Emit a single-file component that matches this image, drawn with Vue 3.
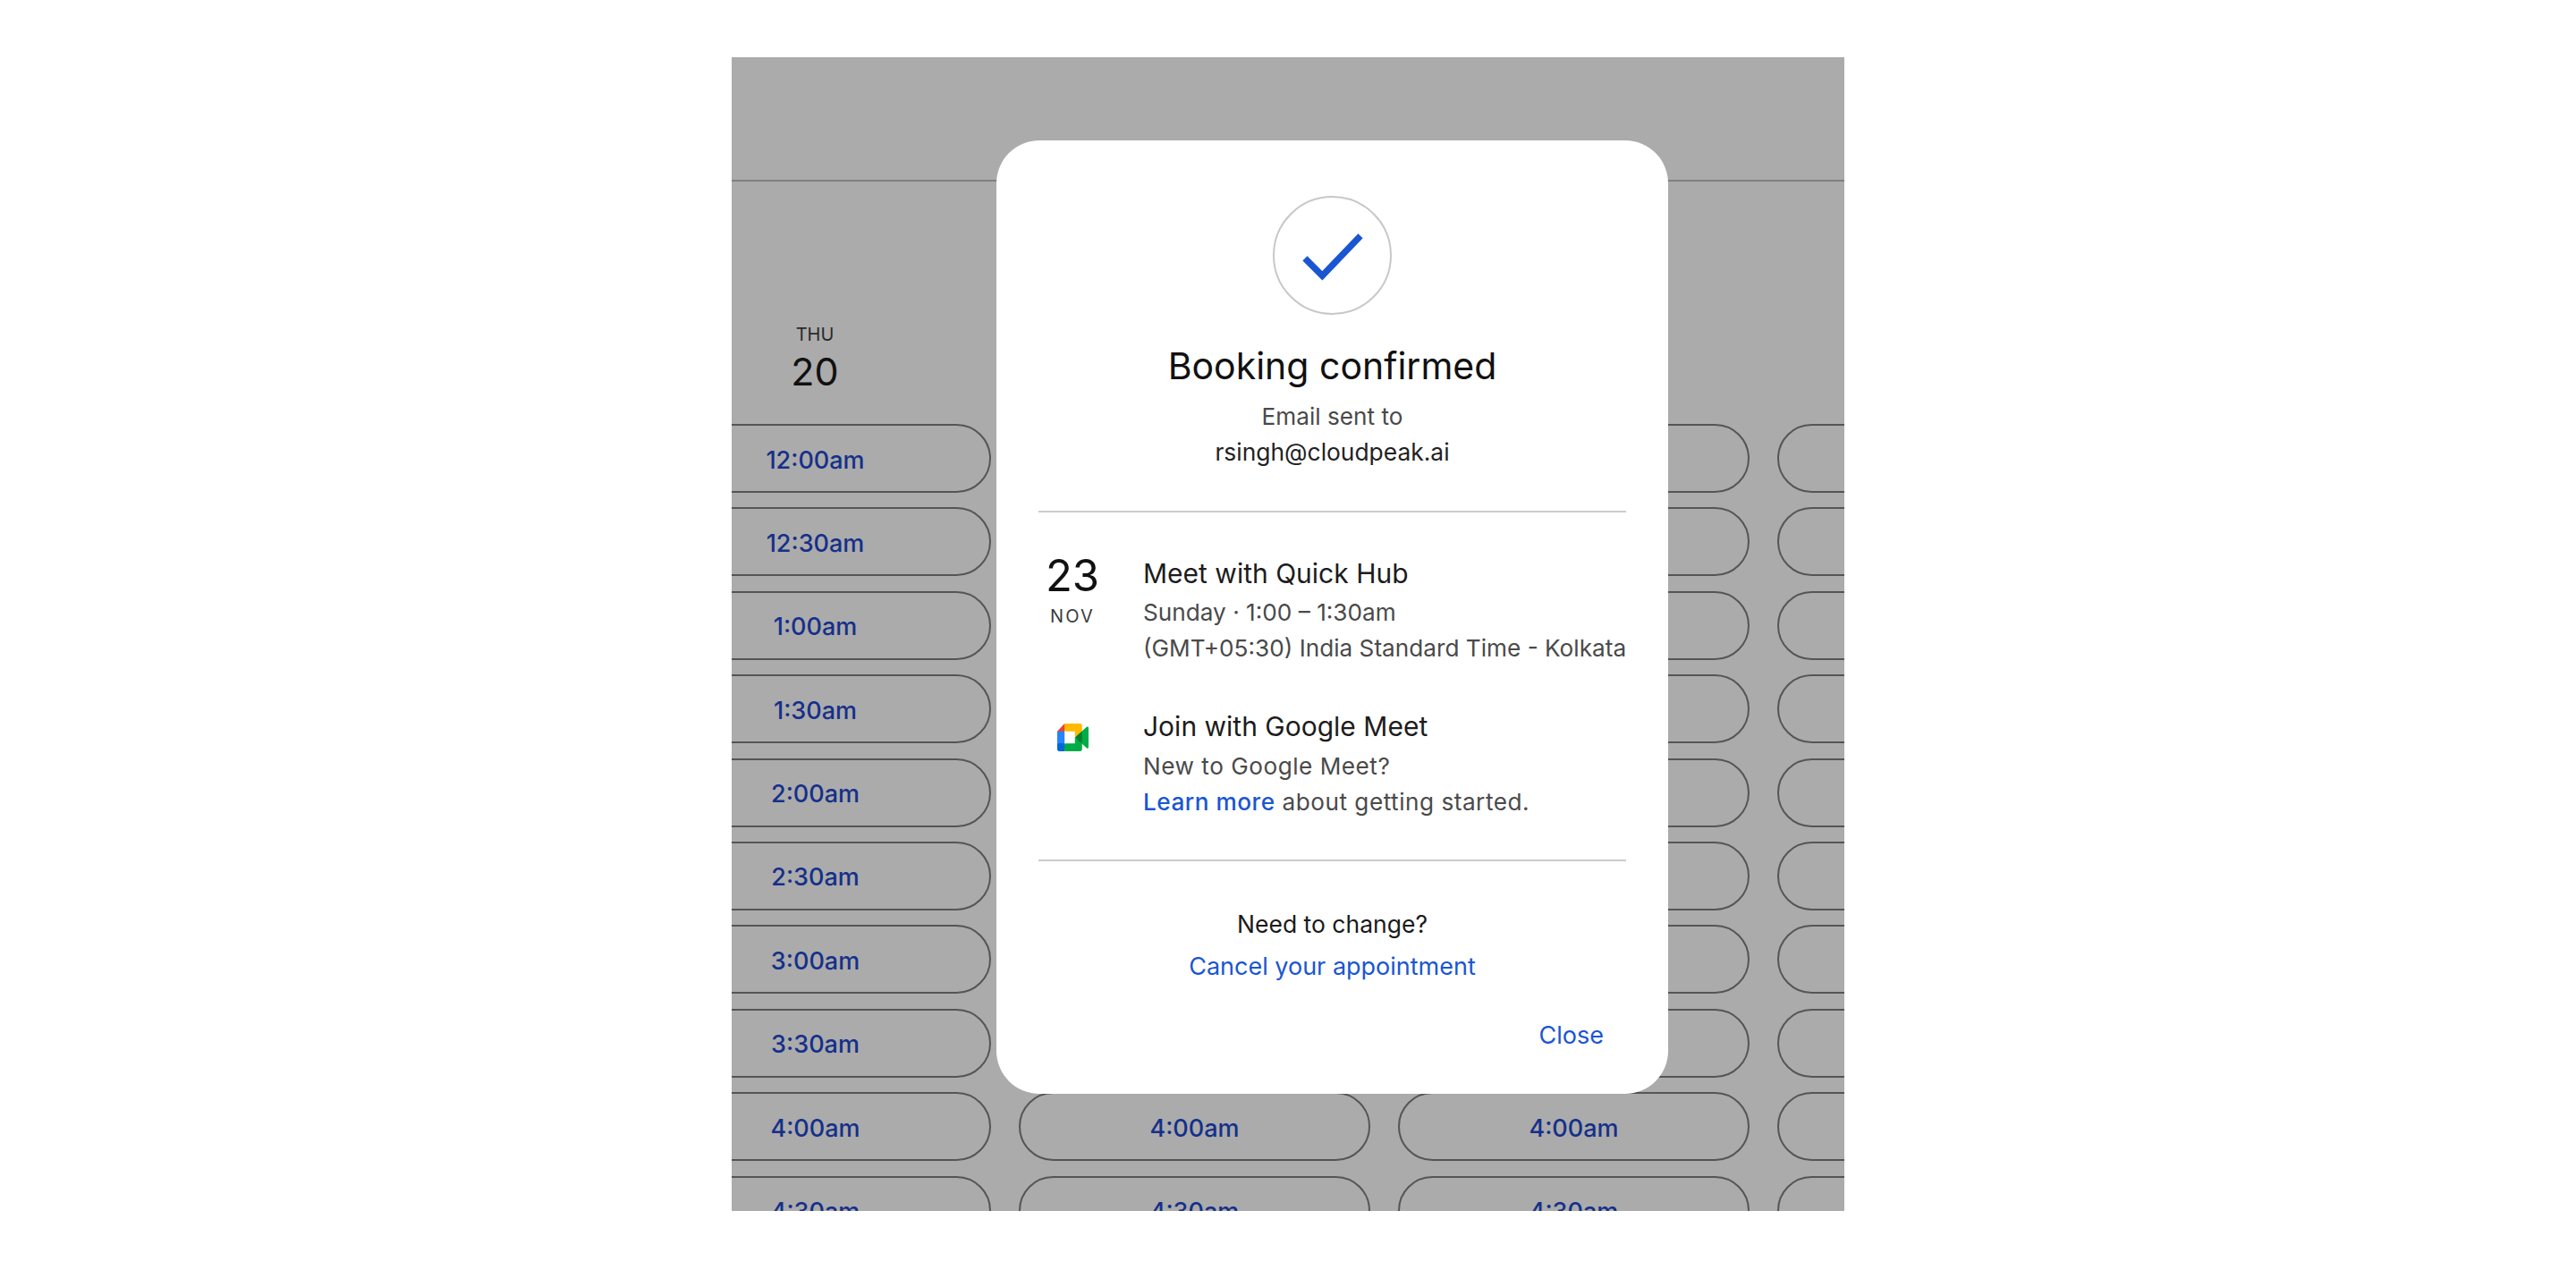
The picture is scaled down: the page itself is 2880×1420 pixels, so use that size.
<template>
  <div class="page">
    <div class="panel">
      <div class="topbar"></div>
      <div class="day">
        <span class="dow">THU</span>
        <span class="dom">20</span>
      </div>
      <div class="slots">
        <template v-for="(t, i) in times" :key="t">
          <div v-for="c in 4" :key="c" class="slot">{{ slotLabel(t, i, c) }}</div>
        </template>
      </div>

      <!-- dialog over the calendar -->
      <div class="dialog">
        <div class="summary">
          <div class="tick">
            <svg width="133" height="133" viewBox="0 0 133 133">
              <path d="M35 70 L55 90 L99 44" fill="none" stroke="#1a56d1" stroke-width="7.5" />
            </svg>
          </div>
          <h1>Booking confirmed</h1>
          <p class="muted">Email sent to</p>
          <p class="email">rsingh@cloudpeak.ai</p>
        </div>

        <div class="details">
          <div class="row">
            <div class="lead date">
              <span class="num">23</span>
              <span class="mon">NOV</span>
            </div>
            <div class="info">
              <div class="name">Meet with Quick Hub</div>
              <div class="muted">Sunday · 1:00 – 1:30am</div>
              <div class="muted">(GMT+05:30) India Standard Time - Kolkata</div>
            </div>
          </div>
          <div class="row">
            <div class="lead">
              <svg class="meet" width="35" height="31" viewBox="0 0 87.5 72" preserveAspectRatio="none">
                <path fill="#00832d" d="M49.5 36l8.53 9.75 11.47 7.33 2-17.02-2-16.64-11.69 6.44z" />
                <path fill="#0066da" d="M0 51.5V66c0 3.315 2.685 6 6 6h14.5l3-10.96-3-9.54-9.95-3z" />
                <path fill="#e94235" d="M20.5 0L0 20.5l10.55 3 9.95-3 2.95-9.41z" />
                <path fill="#2684fc" d="M20.5 20.5H0v31h20.5z" />
                <path fill="#00ac47" d="M82.6 8.68L69.5 19.42v33.66l13.16 10.79c1.97 1.54 4.85.135 4.85-2.37V11c0-2.535-2.945-3.925-4.91-2.32zM49.5 36v15.5h-29V72h43c3.315 0 6-2.685 6-6V53.08z" />
                <path fill="#ffba00" d="M63.5 0h-43v20.5h29V36l20-16.57V6c0-3.315-2.685-6-6-6z" />
              </svg>
            </div>
            <div class="info">
              <div class="name join">Join with Google Meet</div>
              <div class="muted wide">New to Google Meet?</div>
              <div class="muted wide"><a class="link strong">Learn more</a> about getting started.</div>
            </div>
          </div>
        </div>

        <div class="change">
          <div class="need">Need to change?</div>
          <a class="link cancel">Cancel your appointment</a>
        </div>

        <div class="actions">
          <a class="link">Close</a>
        </div>
      </div>
    </div>
  </div>
</template>

<script setup>
const times = [
  '12:00am', '12:30am', '1:00am', '1:30am', '2:00am',
  '2:30am', '3:00am', '3:30am', '4:00am', '4:30am',
]

// middle columns are covered by the dialog down to 4:00am, last column runs off the panel
const slotLabel = (t, rowIndex, col) => {
  if (col === 1) return t
  if (col < 4 && rowIndex >= 8) return t
  return ''
}
</script>

<style>
html, body {
  margin: 0;
  background: #fff;
}
</style>

<style scoped>
.page {
  height: 1420px;
  padding-top: 64px;
  box-sizing: border-box;
  display: flex;
  justify-content: center;
  font-family: Inter, "Liberation Sans", sans-serif;
}

.panel {
  position: relative;
  width: 1244px;
  height: 1290px;
  background: #ababab;
  overflow: hidden;
}

.topbar {
  height: 137px;
  border-bottom: 2px solid #808080;
}

/* first column sits partly outside the panel, as if scrolled */
.day {
  width: 392px;
  margin-left: -103px;
  padding-top: 159px;
  display: flex;
  flex-direction: column;
  align-items: center;
  color: #111;
}
.dow {
  font-size: 20px;
  line-height: 24px;
  color: #2a2a2a;
}
.dom {
  font-size: 43px;
  line-height: 52px;
  margin-top: 3px;
}

.slots {
  display: grid;
  grid-template-columns: repeat(4, 393px);
  column-gap: 31px;
  row-gap: 16.4px;
  margin-left: -103px;
  margin-top: 33px;
}
.slot {
  height: 77px;
  box-sizing: border-box;
  border: 2px solid #555;
  border-radius: 39px;
  display: flex;
  align-items: center;
  justify-content: center;
  padding-top: 3px;
  font-size: 27px;
  font-weight: 500;
  color: #15308a;
}

.dialog {
  position: absolute;
  left: 296px;
  top: 93px;
  width: 751px;
  height: 1066px;
  box-sizing: border-box;
  background: #fff;
  border-radius: 48px;
  padding: 62px 47px 0;
  display: flex;
  flex-direction: column;
}

.summary {
  display: flex;
  flex-direction: column;
  align-items: center;
  padding-bottom: 46px;
  border-bottom: 2px solid #ccc;
}
.tick {
  width: 133px;
  height: 133px;
  box-sizing: border-box;
  border: 2px solid #c8c8c8;
  border-radius: 50%;
  display: flex;
  align-items: center;
  justify-content: center;
}
h1 {
  margin: 29px 0 9px;
  font-size: 41px;
  line-height: 56px;
  font-weight: 400;
  color: #111;
}
p {
  margin: 0;
  font-size: 26px;
  line-height: 39px;
}
.email {
  color: #222;
  font-size: 26.4px;
}
.muted {
  font-size: 26.2px;
  line-height: 40px;
  color: #4a4a4a;
}
.wide {
  letter-spacing: 0.5px;
}

.details {
  padding: 48px 0 44px;
  border-bottom: 2px solid #ccc;
  display: flex;
  flex-direction: column;
  gap: 48px;
}
.row {
  display: flex;
  gap: 41px;
}
.lead {
  width: 76px;
  flex: none;
  display: flex;
  flex-direction: column;
  align-items: center;
}
.date {
  margin-top: -3px;
  color: #111;
}
.num {
  font-size: 49px;
  line-height: 52px;
}
.mon {
  font-size: 20px;
  line-height: 26px;
  margin-top: 6px;
  letter-spacing: 2.2px;
  color: #3c3c3c;
}
.meet {
  margin-top: 16px;
}
.name {
  font-size: 30px;
  line-height: 40px;
  margin-bottom: 4px;
  color: #1c1c1c;
}
.join {
  margin-top: -1px;
  margin-bottom: 5px;
}
.info .muted {
  white-space: nowrap;
}

.link {
  color: #1a56d1;
  cursor: pointer;
}
.strong {
  font-weight: 500;
}

.change {
  margin-top: 50px;
  display: flex;
  flex-direction: column;
  align-items: center;
  font-size: 26.5px;
  line-height: 40px;
}
.need {
  color: #1a1a1a;
}
.cancel {
  margin-top: 8px;
  font-size: 27px;
}

.actions {
  margin-top: 37px;
  padding-right: 25px;
  text-align: right;
  font-size: 27px;
  line-height: 40px;
}
</style>
